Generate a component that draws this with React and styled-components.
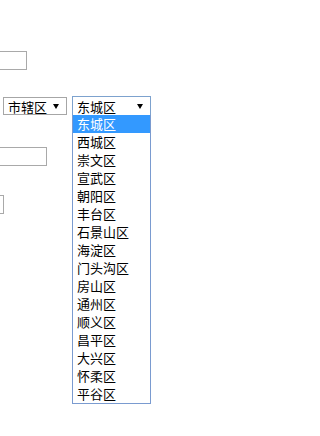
import React from 'react';
import styled, { createGlobalStyle } from 'styled-components';

const GlobalStyle = createGlobalStyle`
  html, body {
    margin: 0;
    padding: 0;
    background: #ffffff;
  }
  body {
    font-family: "Noto Sans CJK SC", "Liberation Sans", sans-serif;
    font-size: 13px;
    color: #000;
  }
`;

const Page = styled.div`
  display: flex;
  flex-direction: column;
  align-items: flex-start;
  min-height: 436px;
  box-sizing: border-box;
  padding-top: 51px;
`;

const TextBox = styled.div`
  box-sizing: border-box;
  width: ${p => p.width}px;
  height: 19px;
  margin-top: ${p => p.top || 0}px;
  border: 1px solid #a9a9a9;
  border-left: none;
  background: #fff;
`;

const SelectRow = styled.div`
  display: flex;
  align-items: center;
  gap: 5px;
  height: 20px;
  margin-top: 26px;
  padding-left: 3px;
`;

const Select = styled.div`
  position: relative;
  box-sizing: border-box;
  display: flex;
  align-items: center;
  justify-content: space-between;
  width: ${p => p.width}px;
  height: ${p => (p.open ? 20 : 18)}px;
  padding: 0 7px 0 4px;
  border: 1px solid ${p => (p.open ? '#7da2ce' : '#a6a6a6')};
  background: #fff;
  line-height: 1;
`;

const Arrow = styled.span`
  width: 0;
  height: 0;
  border-left: 3px solid transparent;
  border-right: 3px solid transparent;
  border-top: 5px solid #000;
`;

const Menu = styled.ul`
  position: absolute;
  top: 100%;
  left: -1px;
  box-sizing: border-box;
  width: 79px;
  margin: 0;
  padding: 0;
  list-style: none;
  border: 1px solid #7a9bd0;
  border-top: none;
  background: #fff;
  z-index: 2;
`;

const Option = styled.li`
  height: 18px;
  line-height: 18px;
  padding-left: 4px;
  color: ${p => (p.active ? '#fff' : '#000')};
  background: ${p => (p.active ? '#3399ff' : 'transparent')};
  white-space: nowrap;
`;

const districts = [
  '东城区', '西城区', '崇文区', '宣武区', '朝阳区', '丰台区', '石景山区', '海淀区',
  '门头沟区', '房山区', '通州区', '顺义区', '昌平区', '大兴区', '怀柔区', '平谷区'
];

export default function App() {
  return (
    <>
      <GlobalStyle />
      <Page>
        <TextBox width={27} />
        <SelectRow>
          <Select width={64}>
            <span>市辖区</span>
            <Arrow />
          </Select>
          <Select width={79} open>
            <span>东城区</span>
            <Arrow />
            <Menu>
              {districts.map((d, i) => (
                <Option key={d} active={i === 0}>{d}</Option>
              ))}
            </Menu>
          </Select>
        </SelectRow>
        <TextBox width={47} top={31} />
        <TextBox width={4} top={29} />
      </Page>
    </>
  );
}
